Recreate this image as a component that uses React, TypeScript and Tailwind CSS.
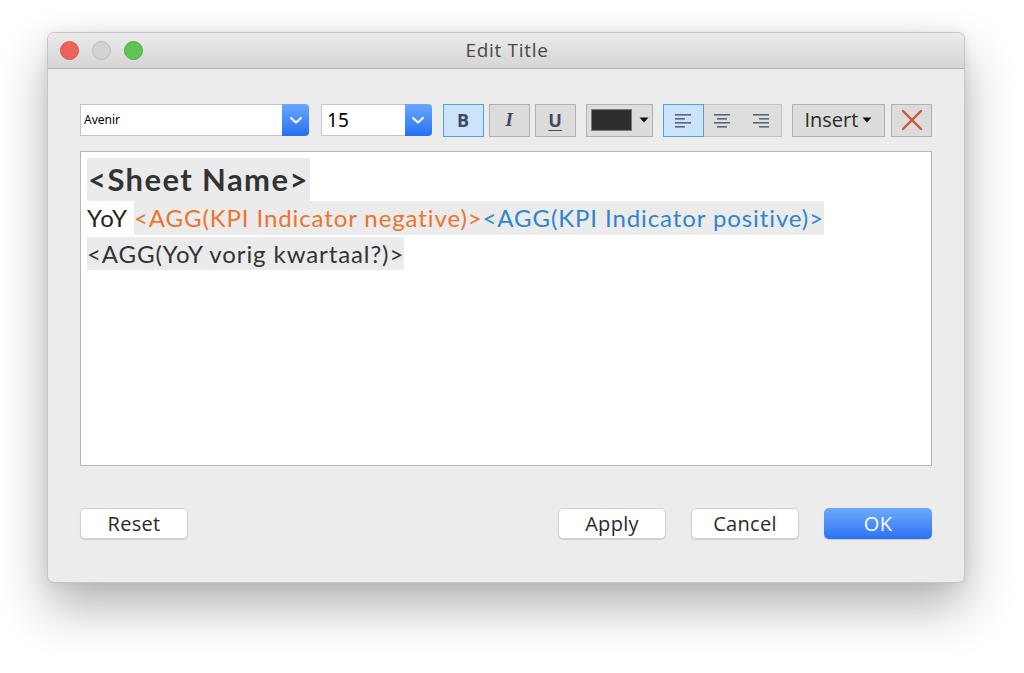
const uiFont = { fontFamily: '"Open Sans", "Liberation Sans", sans-serif' }

function Chevron() {
  return (
    <svg width="14" height="10" viewBox="0 0 14 10">
      <path d="M2 3 L7 7.5 L12 3" fill="none" stroke="white" strokeWidth="2" strokeLinecap="round" strokeLinejoin="round" />
    </svg>
  )
}

function AlignIcon({ kind }: { kind: 'left' | 'center' | 'right' }) {
  const rows = [
    { y: 2, long: true },
    { y: 6, long: false },
    { y: 10, long: true },
    { y: 14, long: false },
  ]
  return (
    <svg width="18" height="16" viewBox="0 0 18 16">
      {rows.map((r) => {
        const w = r.long ? 16 : 10
        const x = kind === 'left' ? 1 : kind === 'right' ? 17 - w : (18 - w) / 2
        return <rect key={r.y} x={x} y={r.y} width={w} height="1.6" fill="#5b6779" />
      })}
    </svg>
  )
}

function Combo({ width, text, textClass }: { width: string; text: string; textClass: string }) {
  return (
    <div className={`flex h-[32px] ${width}`}>
      <div className={`flex-1 flex items-center bg-white border border-[#c4c4c4] border-r-0 pl-[3px] text-black ${textClass}`}>
        {text}
      </div>
      <div className="w-[27px] flex items-center justify-center rounded-r-[4px] bg-gradient-to-b from-[#6aa8fb] to-[#2470f4]">
        <Chevron />
      </div>
    </div>
  )
}

function DialogButton({ label, primary }: { label: string; primary?: boolean }) {
  return (
    <button
      className={
        primary
          ? 'w-[108px] h-[31px] rounded-[5px] bg-gradient-to-b from-[#6ea9fa] to-[#2a72f4] text-white text-[20px] tracking-[0.3px] shadow-[0_1px_1px_rgba(0,0,0,0.15)]'
          : 'w-[108px] h-[31px] rounded-[5px] bg-white border border-[#d2d2d2] text-[#2a2a2a] text-[20px] tracking-[0.3px] shadow-[0_1px_1px_rgba(0,0,0,0.12)]'
      }
      style={uiFont}
    >
      {label}
    </button>
  )
}

export default function App() {
  return (
    <div className="w-[1024px] h-[673px] bg-white pl-[47px] pt-[32px]">
      <div className="w-[918px] h-[551px] rounded-[7px] border border-[#c6c6c6] bg-[#ececec] flex flex-col overflow-hidden shadow-[0_24px_50px_rgba(0,0,0,0.3),0_0_12px_rgba(0,0,0,0.08)]">
        {/* title bar */}
        <div className="h-[36px] relative flex items-center justify-center bg-gradient-to-b from-[#ebebeb] to-[#d5d5d5] border-b border-[#b4b4b4]">
          <div className="absolute left-[12px] top-[8px] flex gap-[13px]">
            <div className="w-[19px] h-[19px] rounded-full bg-[#ee6259] border border-[#d9514a]" />
            <div className="w-[19px] h-[19px] rounded-full bg-[#d3d3d3] border border-[#bdbdbd]" />
            <div className="w-[19px] h-[19px] rounded-full bg-[#5fc454] border border-[#4daa42]" />
          </div>
          <span className="text-[19px] tracking-[0.7px] text-[#474747] pl-[2px]" style={uiFont}>Edit Title</span>
        </div>

        {/* body */}
        <div className="flex-1 flex flex-col pl-[32px] pr-[32px] pt-[35px]">
          {/* toolbar */}
          <div className="flex items-center h-[32px]">
            <Combo width="w-[230px]" text="Avenir" textClass="text-[12px]" />
            <div className="w-[12px]" />
            <Combo width="w-[111px]" text="15" textClass="text-[19px] pl-[5px]" />
            <div className="w-[11px]" />
            <div className="flex gap-[5px]">
              <div className="w-[41px] h-[33px] flex items-center justify-center bg-[#cbe3fb] border border-[#4aa0f2] text-[#3e4b5e] font-bold text-[18px]" style={uiFont}>B</div>
              <div className="w-[41px] h-[33px] flex items-center justify-center bg-[#dcdcdc] border border-[#b0b0b0] text-[#3e4b5e] italic font-bold text-[19px]" style={{ fontFamily: '"Liberation Serif", serif' }}>I</div>
              <div className="w-[41px] h-[33px] flex items-center justify-center bg-[#dcdcdc] border border-[#b0b0b0] text-[#3e4b5e] font-bold text-[18px] underline underline-offset-[3px]" style={uiFont}>U</div>
            </div>
            <div className="w-[10px]" />
            <div className="w-[67px] h-[33px] flex items-center bg-[#dcdcdc] border border-[#b0b0b0] pl-[4px]">
              <div className="w-[41px] h-[22px] bg-[#2e2e2e] border border-[#7a7a7a]" />
              <svg width="16" height="8" viewBox="0 0 16 8" className="ml-[4px]">
                <path d="M3.5 1.5 L12.5 1.5 L8 6.5 Z" fill="#111" />
              </svg>
            </div>
            <div className="w-[10px]" />
            <div className="flex h-[33px] border border-[#c2c2c2] bg-[#dedede]">
              <div className="w-[39px] flex items-center justify-center bg-[#cbe3fb] outline outline-1 outline-[#4aa0f2]">
                <AlignIcon kind="left" />
              </div>
              <div className="w-[39px] flex items-center justify-center">
                <AlignIcon kind="center" />
              </div>
              <div className="w-[39px] flex items-center justify-center">
                <AlignIcon kind="right" />
              </div>
            </div>
            <div className="w-[10px]" />
            <div className="w-[94px] h-[33px] flex items-center justify-center gap-[4px] bg-[#dcdcdc] border border-[#b0b0b0] text-[#2a2a2a] text-[20px]" style={uiFont}>
              Insert
              <svg width="10" height="6" viewBox="0 0 10 6">
                <path d="M0.5 0.5 L9.5 0.5 L5 5.5 Z" fill="#111" />
              </svg>
            </div>
            <div className="w-[6px]" />
            <div className="w-[41px] h-[33px] flex items-center justify-center bg-[#dcdcdc] border border-[#b0b0b0]">
              <svg width="22" height="22" viewBox="0 0 22 22">
                <path d="M2 2 L20 20 M20 2 L2 20" stroke="#c9563a" strokeWidth="2.4" strokeLinecap="round" />
              </svg>
            </div>
          </div>

          {/* editor */}
          <div className="mt-[15px] h-[315px] bg-white border border-[#b7b7b7] px-[6px] pt-[6px]" style={{ fontFamily: 'Lato, "Noto Sans", sans-serif' }}>
            <div className="flex leading-[43px]">
              <span className="bg-[#ebebeb] text-[#333] font-bold text-[31px] tracking-[1.4px] px-[1px]">&lt;Sheet Name&gt;</span>
            </div>
            <div className="leading-[34px] text-[24px] tracking-[0.9px] flex">
              <span className="text-[#222] pr-[6px]">YoY</span>
              <span className="bg-[#ebebeb]">
                <span className="text-[#e9752f]">&lt;AGG(KPI Indicator negative)&gt;</span>
                <span className="text-[#2f86cd]">&lt;AGG(KPI Indicator positive)&gt;</span>
              </span>
            </div>
            <div className="flex leading-[33px] text-[24px] tracking-[0.9px] mt-[2px]">
              <span className="bg-[#ebebeb] text-[#333]">&lt;AGG(YoY vorig kwartaal?)&gt;</span>
            </div>
          </div>

          {/* buttons */}
          <div className="mt-[42px] flex items-center">
            <DialogButton label="Reset" />
            <div className="flex-1" />
            <div className="flex gap-[25px]">
              <DialogButton label="Apply" />
              <DialogButton label="Cancel" />
              <DialogButton label="OK" primary />
            </div>
          </div>
        </div>
      </div>
    </div>
  )
}
